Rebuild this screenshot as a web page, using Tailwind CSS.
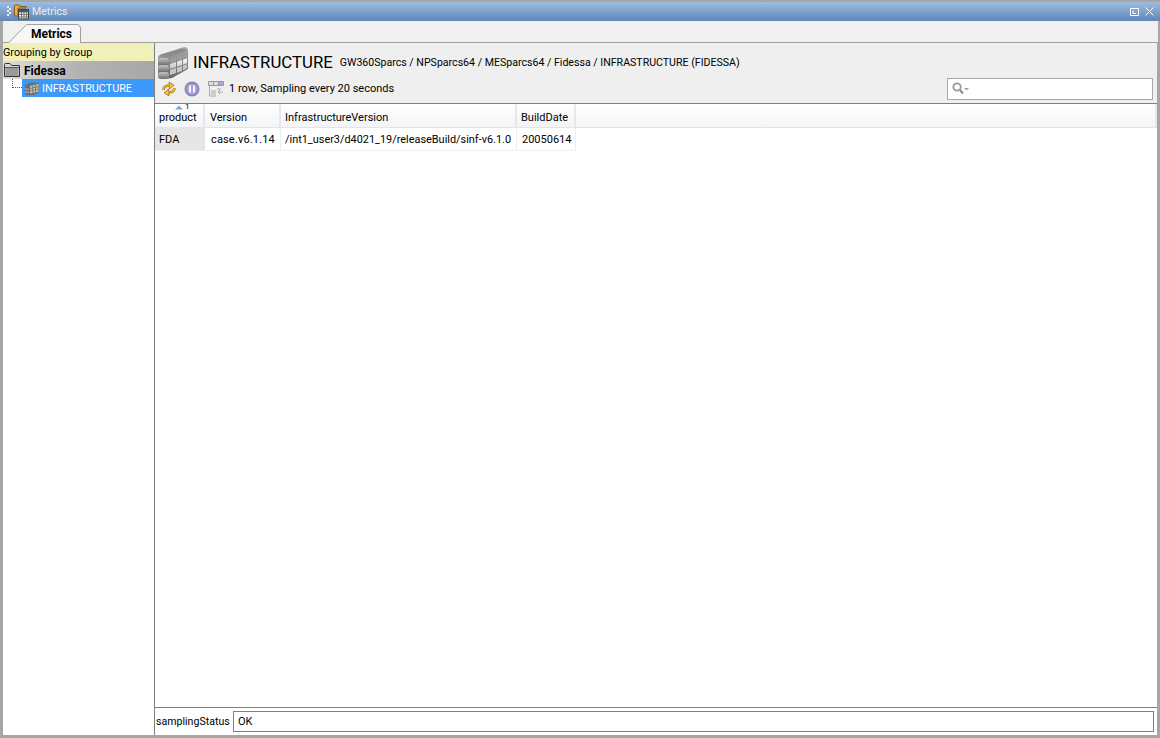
<!DOCTYPE html>
<html lang="en">
<head>
  <meta charset="UTF-8" />
  <script src="https://cdn.jsdelivr.net/npm/@tailwindcss/browser@4"></script>
  <title>Metrics</title>
</head>
<body class="bg-[#a6a6a6]">
  <div class="w-[1160px] h-[738px] flex flex-col overflow-hidden bg-[#a6a6a6] pt-[2px] pb-[3px] font-['Roboto',sans-serif] text-[11px] text-black">

    <!-- Title bar -->
    <div class="h-[19px] flex items-center bg-gradient-to-b from-[#9dbde2] to-[#5f88b6] text-white">
      <svg width="8" height="14" viewBox="0 0 8 14" class="ml-[6px]"><g fill="#e8eef6"><rect x="1" y="1" width="2" height="2"/><rect x="3" y="3" width="2" height="2"/><rect x="1" y="5" width="2" height="2"/><rect x="3" y="7" width="2" height="2"/><rect x="1" y="9" width="2" height="2"/></g></svg>
      <svg width="17" height="17" viewBox="0 0 17 17" class="ml-[-1px]">
        <path d="M1.5 3V13H5V5H13V3.5H7L6 2H2Z" fill="#f0b040" stroke="#8a5a10" stroke-width="1"/>
        <rect x="5.5" y="6.5" width="10" height="9.5" fill="#eeeeee" stroke="#444"/>
        <path d="M6 9H15M6 11.5H15M6 14H15M8.5 7V16M11 7V16M13.5 7V16" stroke="#777" stroke-width="1"/>
        <rect x="6" y="7" width="9" height="2" fill="#555"/>
      </svg>
      <span class="ml-[2px] pt-[1px] text-[10.6px] text-[#e6eef8]">Metrics</span>
      <div class="ml-auto flex items-center gap-[6px] mr-[6px]">
        <svg width="9" height="8" viewBox="0 0 9 8"><path d="M.5.5H8.5V7.5H.5Z" fill="none" stroke="#fff"/><path d="M3 2.5V5.5H6" fill="none" stroke="#fff"/></svg>
        <svg width="9" height="9" viewBox="0 0 9 9"><path d="M.5.5L8.5 8.5M8.5.5L.5 8.5" stroke="#fff" stroke-width="1"/></svg>
      </div>
    </div>

    <!-- Tab strip -->
    <div class="h-[22px] bg-[#f0f0f0] border-b border-[#a0a0a0] flex items-end relative shrink-0 ml-[3px] mr-[2px]">
      <svg width="81" height="19" viewBox="0 0 81 19" class="absolute left-[-3px] bottom-[-1px]">
        <path d="M8.5 19L25.5 1.5Q26 .5 28 .5H77Q80.5 .5 80.5 4V19" fill="#f7f7f7" stroke="#a0a0a0"/>
      </svg>
      <span class="absolute left-[28px] top-[4px] font-bold text-[12px]">Metrics</span>
    </div>

    <!-- Body -->
    <div class="flex-1 min-h-0 flex ml-[3px] mr-[3px] bg-white">

      <!-- Tree -->
      <aside class="w-[152px] shrink-0 border-r border-[#808080] bg-white">
        <div class="h-[18px] pt-[2px] bg-[#f0f0b8] flex items-center whitespace-nowrap text-[10.8px]">Grouping by Group</div>
        <div class="h-[18px] flex items-center bg-gradient-to-r from-[#dedede] via-[#b2b2b2] to-[#a8a8a8]">
          <svg width="17" height="16" viewBox="0 0 17 16" class="ml-[1px]">
            <path d="M.5 14.5V2.5Q.5 1.5 1.5 1.5H6L7.5 3.5H15.5V14.5Z" fill="#d8d8d8" stroke="#333"/>
            <rect x="1.5" y="6" width="13" height="8" fill="#9a9a9a"/>
            <path d="M1 5.5H15" stroke="#555"/>
          </svg>
          <span class="ml-[3px] pt-[1px] font-bold text-[12px]">Fidessa</span>
        </div>
        <div class="h-[18px] relative flex items-center pl-[19px]">
          <div class="absolute left-[9px] top-0 h-[9px] w-[10px] border-l border-b border-dotted border-[#555]"></div>
          <div class="w-[132px] h-[18px] bg-[#3b99fc] flex items-center text-white pl-[2px]">
            <svg width="16" height="15" viewBox="0 0 16 15">
              <path d="M1 4L6 1.5H15V11L10 14H3Q1 14 1 12Z" fill="#6f6f6f"/>
              <path d="M6 5L14.5 3V10.5L6 12.5Z" fill="#c4c4c4"/>
              <path d="M6 7.5L14.5 5.5M6 10L14.5 8M8.8 4.5V12M11.6 3.8V11.3" stroke="#777"/>
              <path d="M1 7.5Q3 9 5 8M1 10.5Q3 12 5 11" stroke="#bbb" fill="none"/>
            </svg>
            <span class="ml-[2px] pt-[2px] whitespace-nowrap text-[10.8px]">INFRASTRUCTURE</span>
          </div>
        </div>
      </aside>

      <!-- Main -->
      <main class="flex-1 min-w-0 flex flex-col">
        <header class="h-[61px] shrink-0 bg-[#efefef] border-b border-[#808080] pl-[3px] pr-[3px] flex flex-col">
          <div class="flex items-center h-[37px] pt-[2px]">
            <svg width="30" height="32" viewBox="0 0 30 32" class="shrink-0">
              <defs>
                <linearGradient id="metal" x1="0" x2="0" y1="0" y2="1"><stop offset="0" stop-color="#a8a8a8"/><stop offset="1" stop-color="#666"/></linearGradient>
                <linearGradient id="slab" x1="0" x2="0" y1="0" y2="1"><stop offset="0" stop-color="#c4c4c4"/><stop offset="1" stop-color="#6e6e6e"/></linearGradient>
                <linearGradient id="face" x1="0" x2="0" y1="0" y2="1"><stop offset="0" stop-color="#ffffff"/><stop offset="1" stop-color="#bdbdbd"/></linearGradient>
              </defs>
              <path d="M0 11Q0 8 4 7L26 0Q30 0 30 4V22L14 31Q4 33 0 28Z" fill="url(#metal)"/>
              <path d="M2 8L24 1.5L29 3.5L13 9Q6 11 2 8Z" fill="#8a8a8a"/>
              <rect x="0" y="11" width="11" height="7" rx="3" fill="url(#slab)"/>
              <rect x="0" y="18" width="11" height="7" rx="3" fill="url(#slab)"/>
              <rect x="0" y="25" width="11" height="7" rx="3" fill="url(#slab)"/>
              <path d="M12 11L18 9V14L12 16ZM19 8.7L24 7V12L19 13.7ZM25 6.7L29 5.3V10.3L25 11.7Z" fill="#9c9c9c"/>
              <path d="M12 17L18 15V20L12 22ZM19 14.7L24 13V18L19 19.7ZM25 12.7L29 11.3V16.3L25 17.7Z" fill="url(#face)"/>
              <path d="M12 23L18 21V26L12 28ZM19 20.7L24 19V24L19 25.7ZM25 18.7L29 17.3V21L25 23.5Z" fill="#c6c6c6"/>
            </svg>
            <h1 class="ml-[5px] text-[16.8px] font-normal whitespace-nowrap">INFRASTRUCTURE</h1>
            <span class="ml-[7px] whitespace-nowrap pt-[1px] text-[10.6px]">GW360Sparcs / NPSparcs64 / MESparcs64 / Fidessa / INFRASTRUCTURE (FIDESSA)</span>
          </div>
          <div class="flex items-center h-[18px]">
            <svg width="16" height="16" viewBox="0 0 16 16" class="ml-[3px]">
              <path d="M2.5 9Q2.5 5 8 4.5" fill="none" stroke="#a8700f" stroke-width="2.6"/>
              <path d="M2.5 9Q2.5 5 8 4.5" fill="none" stroke="#f2c63e" stroke-width="1.2"/>
              <path d="M8 1L13 4.2L8.5 8Z" fill="#f2c63e" stroke="#a8700f" stroke-width=".8"/>
              <path d="M13.5 7Q13.5 11 8 11.5" fill="none" stroke="#a8700f" stroke-width="2.6"/>
              <path d="M13.5 7Q13.5 11 8 11.5" fill="none" stroke="#f2c63e" stroke-width="1.2"/>
              <path d="M8 15L3 11.8L7.5 8Z" fill="#f2c63e" stroke="#a8700f" stroke-width=".8"/>
            </svg>
            <svg width="16" height="16" viewBox="0 0 16 16" class="ml-[7px]">
              <circle cx="8" cy="8" r="7.5" fill="#8f7fbe"/>
              <circle cx="8" cy="8" r="5.5" fill="#b0a2d2"/>
              <rect x="5" y="4.5" width="2" height="7" fill="#f4f4f4"/><rect x="9" y="4.5" width="2" height="7" fill="#f4f4f4"/>
            </svg>
            <svg width="16" height="16" viewBox="0 0 16 16" class="ml-[8px]">
              <path d="M.5 .5H15.5V4.5H.5Z" fill="#dddddd" stroke="#999"/>
              <rect x="11" y="1" width="4" height="3" fill="#a8a8d8"/>
              <path d="M5.5 1V4M10.5 1V4" stroke="#999"/>
              <path d="M1.5 5V15H8M9 8H13" fill="none" stroke="#aaa"/>
              <rect x="3" y="9" width="5" height="5" fill="#ccc"/>
              <path d="M10 11H15M10 11L12 9M10 11L12 13" stroke="#aaa" fill="none"/>
            </svg>
            <span class="ml-[5px]">1 row, Sampling every 20 seconds</span>
            <div class="ml-auto mr-[1px] mt-[-1px] w-[206px] h-[22px] bg-white border border-[#a8a8a8] flex items-center pl-[4px]">
              <svg width="18" height="13" viewBox="0 0 18 13">
                <circle cx="5" cy="5" r="3.7" fill="none" stroke="#9a9a9a" stroke-width="1.8"/>
                <path d="M8 8L11 11.5" stroke="#8a8a8a" stroke-width="2"/>
                <path d="M12 6H17L14.5 8.5Z" fill="#a0a0a0"/>
              </svg>
            </div>
          </div>
        </header>

        <!-- Table -->
        <div class="flex-1 min-h-0 bg-white relative">
          <svg width="8" height="5" viewBox="0 0 8 5" class="absolute left-[20px] top-[1px]"><path d="M0 4.5L4 .5L8 4.5Z" fill="#7fa8d8"/></svg>
          <span class="absolute left-[30px] top-[-1px] text-[8px] leading-[8px]">1</span>
          <div class="flex h-[24px] border-b border-[#e4e4e4]">
            <div class="w-[50px] flex items-end leading-[14px] pb-[2px] pl-[4px] border-r-2 border-[#e8e8e8] bg-gradient-to-b from-white to-[#f2f4f6]">product</div>
            <div class="w-[76px] flex items-end leading-[14px] pb-[2px] pl-[5px] border-r-2 border-[#e8e8e8] bg-gradient-to-b from-white to-[#f2f4f6]">Version</div>
            <div class="w-[236px] flex items-end leading-[14px] pb-[2px] pl-[4px] border-r-2 border-[#e8e8e8] bg-gradient-to-b from-white to-[#f2f4f6]">InfrastructureVersion</div>
            <div class="w-[59px] flex items-end leading-[14px] pb-[2px] pl-[4px] border-r-2 border-[#e8e8e8] bg-gradient-to-b from-white to-[#f2f4f6]">BuildDate</div>
            <div class="flex-1 bg-gradient-to-b from-white to-[#f2f4f6] border-r-2 border-[#e8e8e8]"></div>
          </div>
          <div class="flex h-[23px] items-stretch">
            <div class="w-[50px] flex items-center pt-[2px] pl-[4px] bg-[#e6e6e6] border-b border-[#eeeeee]">FDA</div>
            <div class="w-[76px] flex items-center pt-[2px] pl-[6px] tracking-[0.15px] border-r border-b border-[#eeeeee] whitespace-nowrap">case.v6.1.14</div>
            <div class="w-[236px] flex items-center pt-[2px] pl-[4px] text-[10.9px] border-r border-b border-[#eeeeee] whitespace-nowrap">/int1_user3/d4021_19/releaseBuild/sinf-v6.1.0</div>
            <div class="w-[59px] flex items-center pt-[2px] pl-[5px] border-r border-b border-[#eeeeee]">20050614</div>
          </div>
        </div>

        <!-- Status field -->
        <div class="h-[28px] shrink-0 border-t border-[#808080] flex items-center pl-[1px] pr-[3px]">
          <span class="w-[77px] shrink-0 pt-[1px] text-[10.6px]">samplingStatus</span>
          <div class="flex-1 h-[21px] border border-[#808080] flex items-center pl-[4px] pt-[1px]">OK</div>
        </div>
      </main>
    </div>
  </div>
</body>
</html>
